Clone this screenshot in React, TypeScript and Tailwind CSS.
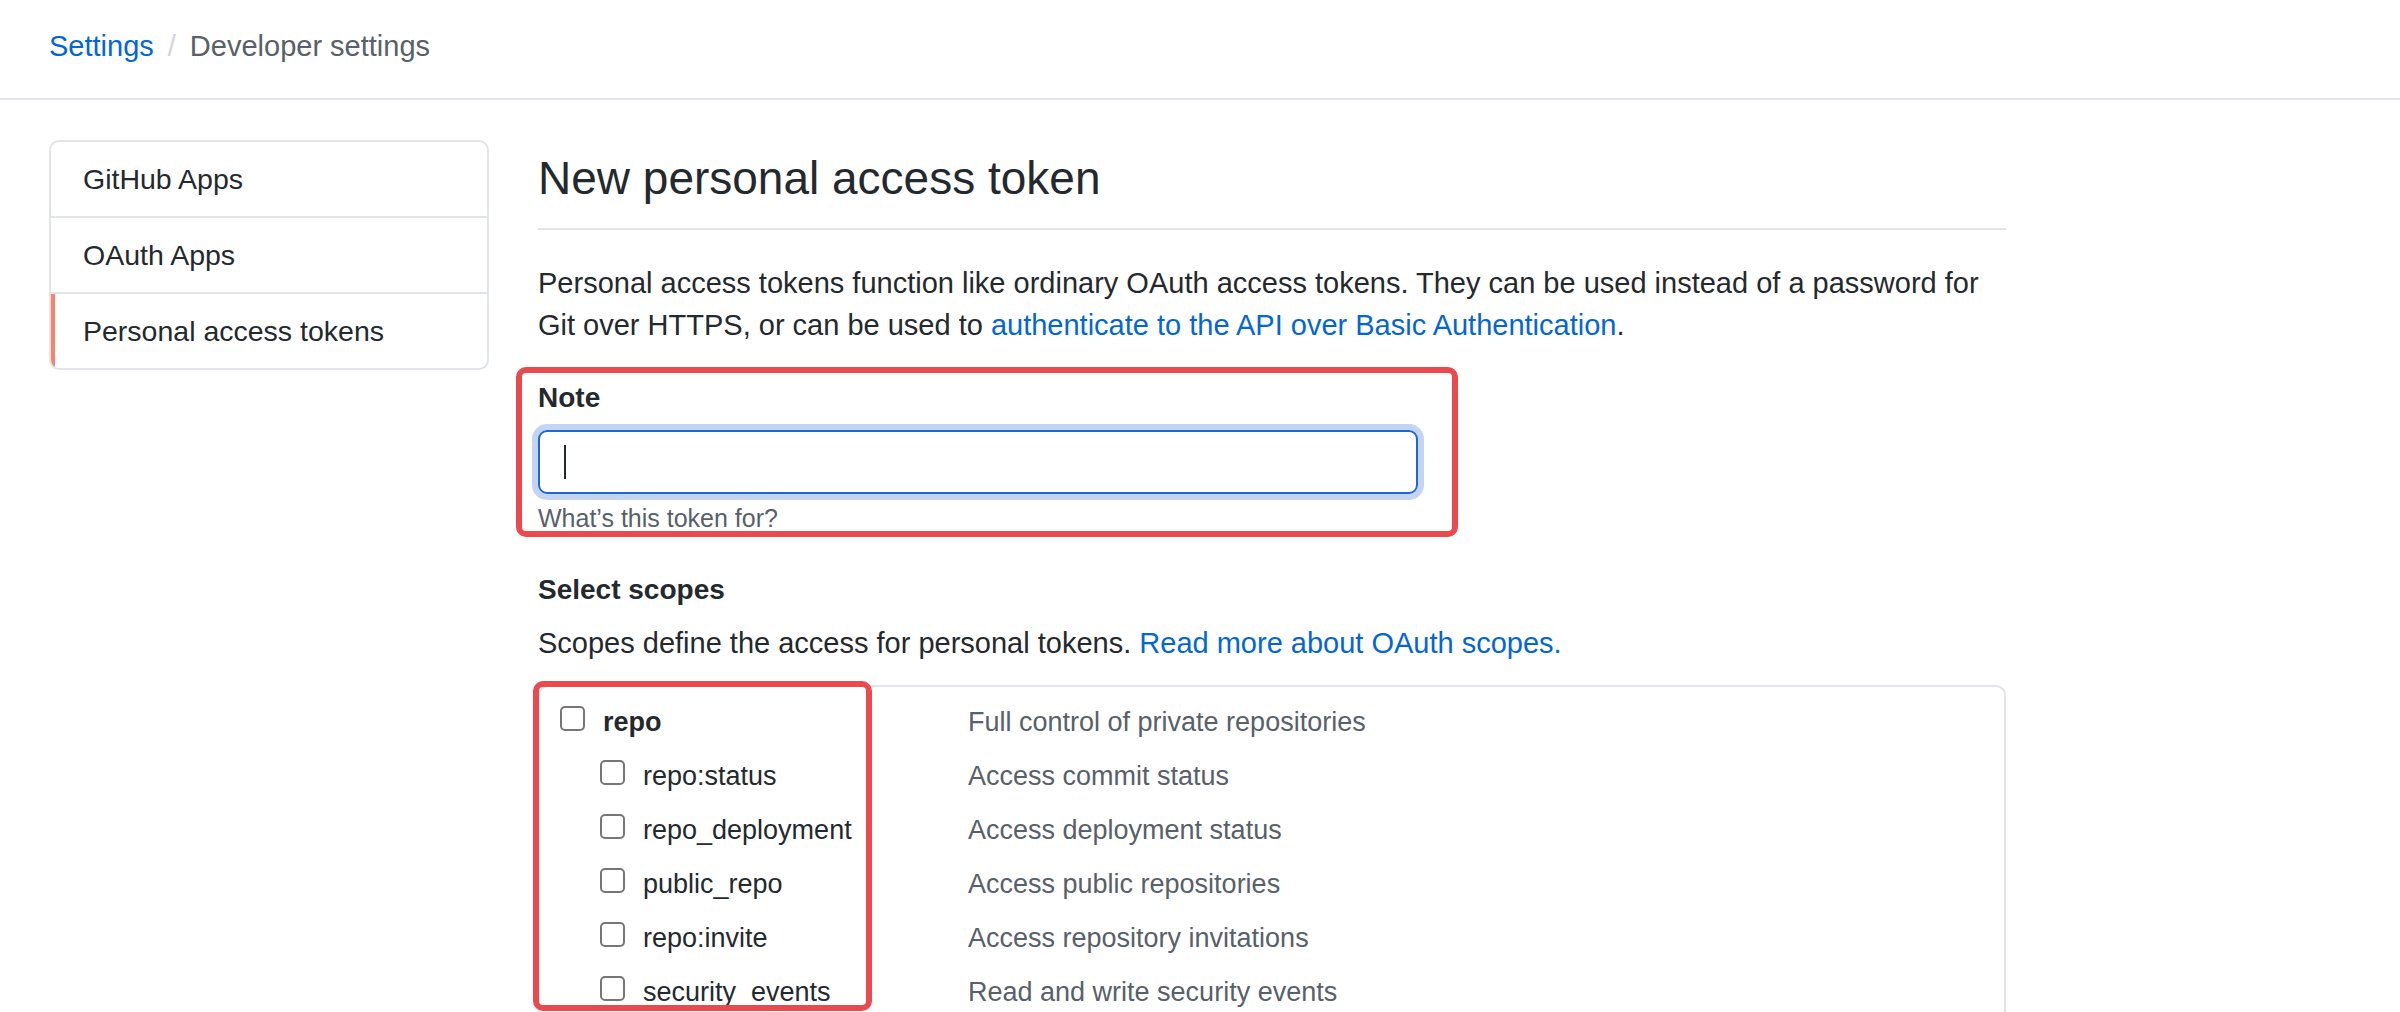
import clsx from "clsx";

const scopes = [
    { name: "repo", desc: "Full control of private repositories", child: false },
    { name: "repo:status", desc: "Access commit status", child: true },
    { name: "repo_deployment", desc: "Access deployment status", child: true },
    { name: "public_repo", desc: "Access public repositories", child: true },
    { name: "repo:invite", desc: "Access repository invitations", child: true },
    { name: "security_events", desc: "Read and write security events", child: true },
];

const menu = ["GitHub Apps", "OAuth Apps", "Personal access tokens"];

const Checkbox = () => (
    <span className="mt-[4px] h-[25px] w-[25px] shrink-0 rounded-[5px] border-2 border-[#767676] bg-white" />
);

const ScopeRow = ({ name, desc, child }: { name: string; desc: string; child: boolean }) => (
    <div className="flex h-[54px] pt-[7px] text-[27px] leading-[40px]">
        <div className={clsx("flex w-[428px] shrink-0 items-start", child ? "pl-[60px]" : "pl-[20px]")}>
            <Checkbox />
            <span className={clsx("ml-[18px] text-[#24292e]", !child && "font-bold")}>{name}</span>
        </div>
        <div className="text-[#586069]">{desc}</div>
    </div>
);

export default function App() {
    return (
        <div className="h-[1012px] w-[2400px] overflow-hidden bg-white text-[#24292e] font-['Liberation_Sans',Arial,sans-serif]">
            {/* breadcrumb header */}
            <header className="h-[100px] border-b-2 border-[#e1e4e8] pl-[49px] pt-[24px]">
                <div className="flex text-[29px] leading-[44px]">
                    <span className="text-[#0366d6]">Settings</span>
                    <span className="mx-[14px] text-[#d1d5da]">/</span>
                    <span className="text-[#586069]">Developer settings</span>
                </div>
            </header>

            <div className="flex pl-[49px] pt-[40px]">
                {/* side menu */}
                <aside className="w-[440px] shrink-0 self-start overflow-hidden rounded-[10px] border-2 border-[#e1e4e8]">
                    {menu.map((item, i) => (
                        <div
                            key={item}
                            className={clsx(
                                "relative h-[74px] pl-[32px] text-[28.5px] leading-[74px]",
                                i > 0 && "box-content border-t-2 border-[#e1e4e8]"
                            )}
                        >
                            {i === menu.length - 1 && (
                                <span className="absolute bottom-0 left-0 top-0 w-[4px] bg-[#f9826c]" />
                            )}
                            {item}
                        </div>
                    ))}
                </aside>

                {/* main form */}
                <main className="relative ml-[49px] w-[1468px] pt-[8px]">
                    <h2 className="border-b-2 border-[#e1e4e8] pb-[20px] text-[46px] font-normal leading-[60px]">
                        New personal access token
                    </h2>

                    <p className="mt-[32px] text-[29px] leading-[42px]">
                        Personal access tokens function like ordinary OAuth access tokens. They can be used instead of a password for
                        <br />
                        Git over HTTPS, or can be used to{" "}
                        <span className="text-[#0366d6]">authenticate to the API over Basic Authentication</span>.
                    </p>

                    <div className="mt-[32px]">
                        <div className="text-[28px] font-bold leading-[40px]">Note</div>
                        <div className="mt-[12px] flex h-[64px] w-[880px] items-center rounded-[9px] border-[2.5px] border-[#1f66d6] pl-[24px] shadow-[0_0_0_6px_#c3d5f2]">
                            <span className="h-[34px] w-[2px] bg-[#24292e]" />
                        </div>
                        <div className="mt-[7px] text-[25px] leading-[34px] text-[#586069]">What’s this token for?</div>
                    </div>

                    <div className="mt-[35px] text-[28px] font-bold leading-[40px]">Select scopes</div>
                    <p className="mt-[12px] text-[29px] leading-[42px]">
                        Scopes define the access for personal tokens.{" "}
                        <span className="text-[#0366d6]">Read more about OAuth scopes.</span>
                    </p>

                    <div className="mt-[21px] rounded-[10px] border-2 border-[#e1e4e8] pt-[8px]">
                        {scopes.map((s) => (
                            <ScopeRow key={s.name} {...s} />
                        ))}
                    </div>

                    {/* red annotation frames */}
                    <div className="pointer-events-none absolute left-[-22px] top-[227px] h-[170px] w-[942px] rounded-[10px] border-[6px] border-[#ea4a4e]" />
                    <div className="pointer-events-none absolute left-[-5px] top-[541px] h-[330px] w-[339px] rounded-[10px] border-[6px] border-[#ea4a4e]" />
                </main>
            </div>
        </div>
    );
}
